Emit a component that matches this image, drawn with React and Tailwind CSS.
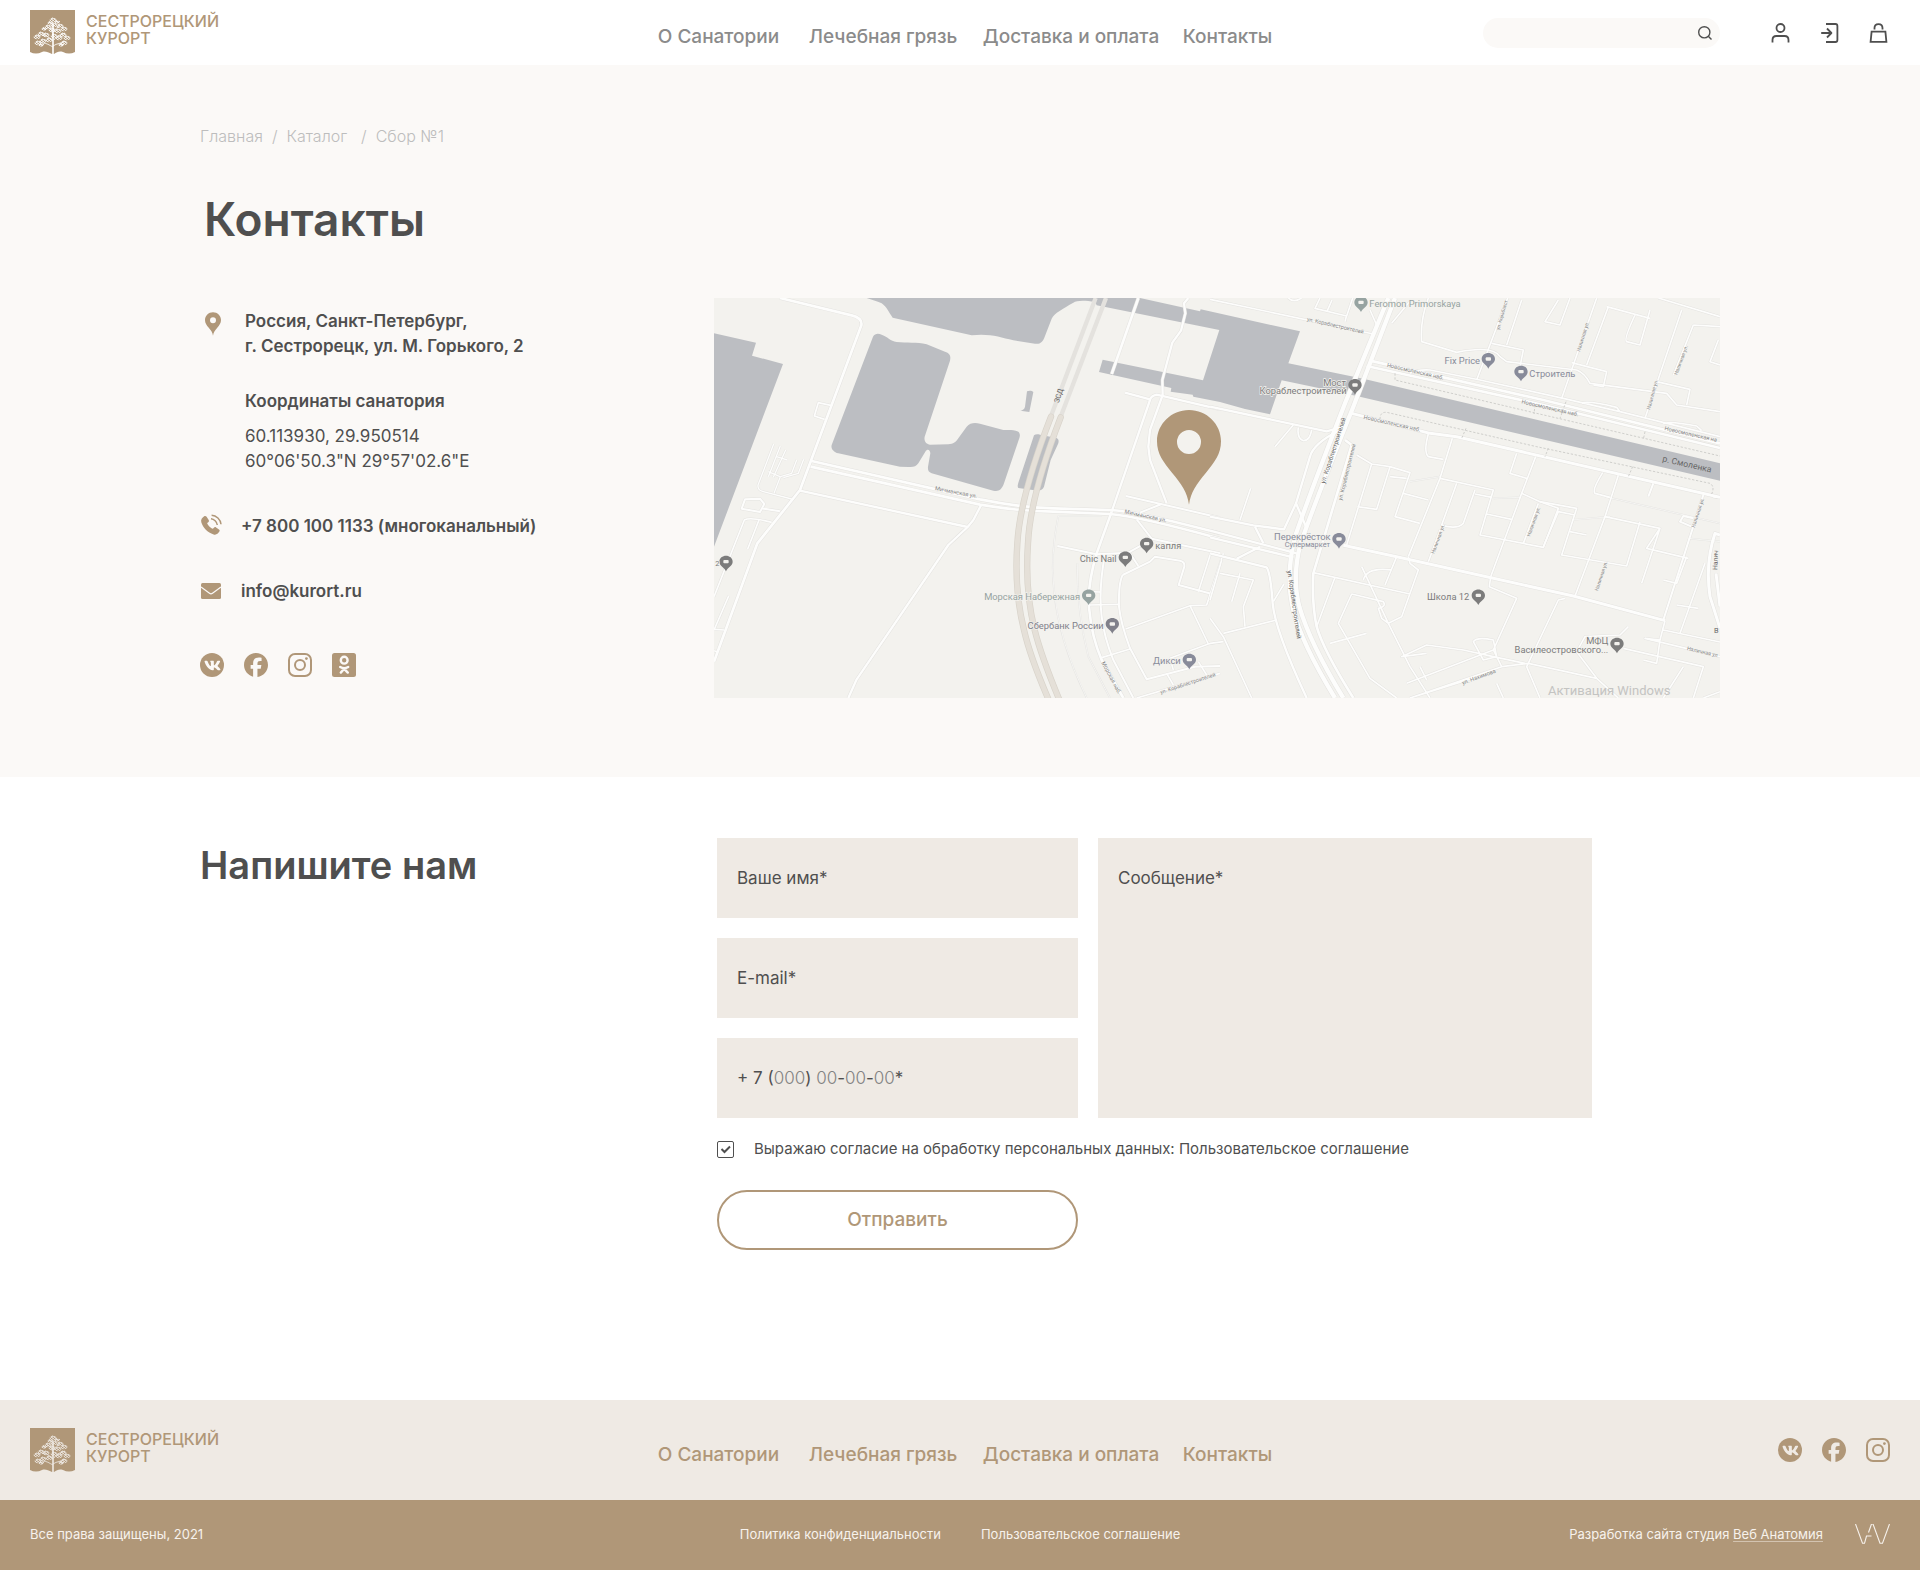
import React from "react";
import { FaFacebook } from "react-icons/fa6";
import { FaVk } from "react-icons/fa";

const PIN_PATH =
  "M96 0C43 0 0 42 0 94C0 132 19 156 45 188C73 222 91 246 96 284C101 246 119 222 147 188C173 156 192 132 192 94C192 42 149 0 96 0ZM96 60A36 36 0 1 1 96 132A36 36 0 1 1 96 60Z";

const NAV = ["О Санатории", "Лечебная грязь", "Доставка и оплата", "Контакты"];

/* ---------- logo ---------- */

const CROWN = [
  [23, 10, 3], [20, 13, 2], [27, 12, 2], [24, 15, 3], [30, 16, 3], [18, 17, 3], [34, 19, 3],
  [14, 19, 2], [22, 20, 3], [28, 21, 3], [11, 24, 3], [7, 27, 3], [16, 25, 3], [33, 25, 3],
  [37, 28, 3], [24, 26, 3], [29, 28, 3], [19, 30, 3], [13, 31, 3], [8, 33, 3], [34, 33, 3],
  [11, 35, 2], [31, 35, 2],
];

function Logo({ cut }) {
  return (
    <a href="#" className="flex items-start gap-[11px] text-[#b09778]">
      <svg width="45" height="44" viewBox="0 0 45 44" aria-hidden="true" className="shrink-0">
        <path d="M0 0H45V42C41 44 37 44 33 42C29 41 27 42 24 44H22C18 42 15 41 12 42C8 44 4 44 0 42Z" fill="#b09778" />
        <g className={cut} fill="none" stroke="currentColor">
          {CROWN.map(([x, y, r], i) => (
            <g key={i} strokeWidth="0.8">
              <ellipse cx={x} cy={y} rx={r} ry={r * 0.6} strokeDasharray="3 1" />
              <path d={`M${x - r} ${y + 1}l2 -2l1 2l2 -2M${x - 1} ${y - r * 0.7}l2 1`} />
            </g>
          ))}
          <path d="M23 44V14" strokeWidth="1.6" />
          <path d="M23 37C19 35 17 33 12 33M23 36C27 33 31 34 35 31M23 31C20 27 16 26 12 25M24 30C27 25 31 25 35 23M23 25C22 20 20 18 17 17M24 22C25 18 28 18 30 15" strokeWidth="0.8" />
        </g>
      </svg>
      <span className="pt-[3px] text-[16px] font-medium leading-[17px]">
        СЕСТРОРЕЦКИЙ
        <br />
        КУРОРТ
      </span>
    </a>
  );
}

function Nav({ tone }) {
  return (
    <nav className={tone}>
      <ul className="grid grid-cols-[151px_174px_200px_auto] pl-[10px] text-[19px] font-medium leading-6">
        {NAV.map((t) => (
          <li key={t} className="whitespace-nowrap">
            <a href="#">{t}</a>
          </li>
        ))}
      </ul>
    </nav>
  );
}

/* ---------- socials ---------- */

function Vk({ cut }) {
  return (
    <span className="grid size-6 place-items-center rounded-full bg-[#b09778]">
      <FaVk className={cut} size={17} aria-hidden="true" />
    </span>
  );
}

function Instagram() {
  return (
    <svg width="24" height="24" viewBox="0 0 24 24" fill="none" stroke="#b09778" strokeWidth="2" aria-hidden="true">
      <rect x="1" y="1" width="22" height="22" rx="6" />
      <circle cx="12" cy="12" r="5" />
      <circle cx="18.4" cy="5.6" r="1.4" fill="#b09778" stroke="none" />
    </svg>
  );
}

function Socials({ cut, ok }) {
  return (
    <div className="flex gap-5 text-[#b09778]">
      <a href="#" aria-label="ВКонтакте"><Vk cut={cut} /></a>
      <a href="#" aria-label="Facebook"><FaFacebook size={24} /></a>
      <a href="#" aria-label="Instagram"><Instagram /></a>
      {ok && (
        <a href="#" aria-label="Одноклассники">
          <svg width="24" height="24" viewBox="0 0 24 24" aria-hidden="true">
            <rect width="24" height="24" rx="2.5" fill="#b09778" />
            <g fill="none" stroke="#fbf9f7" strokeWidth="2.4" strokeLinecap="round" strokeLinejoin="round">
              <circle cx="12.2" cy="7.2" r="3.4" />
              <path d="M8.2 14C10.600 15.500 13.800 15.500 16.200 14M12.200 15.800L8.800 19.600M12.200 15.800L15.800 19.600" />
            </g>
          </svg>
        </a>
      )}
    </div>
  );
}

/* ---------- map ---------- */

const WATER = [
  "M42 130L168 158L156 197L249 222L42 770Z",
  "M500 24L1200 24L1185 36C1150 30 1130 32 1120 38C1090 55 1062 70 1055 86L1035 138C1028 158 1020 163 1005 161L940 151C900 142 870 130 815 136L578 83C568 70 560 50 545 40C530 32 515 30 500 24Z",
  "M1180 24L1320 24L1500 64L1502 58L1800 124L1765 220L1990 266L3060 520V572L1970 318L1745 271L1710 373L1635 357L1560 336L1545 333L1480 320L1478 314L1412 305L1414 294L1197 246L1208 209L1509 271L1558 120L1190 46Z",
  "M519 140C525 130 535 130 545 134C565 141 570 153 590 156C620 160 650 155 680 163L735 185C750 190 753 198 750 212L674 440C671 455 680 463 690 464L745 463C760 462 768 456 775 445L800 410C810 398 825 397 840 401L910 420C925 420 940 418 955 425C962 432 960 440 956 450L912 580C905 600 895 606 880 602L695 550C685 546 683 540 684 530L691 490C690 478 682 475 676 485L655 520C648 530 640 532 625 531L600 530L415 490C400 486 392 475 395 465Z",
  "M981 304C988 301 996 302 1000 306L988 366L961 362C972 360 974 354 975 350Z",
  "M1002 436C1006 433 1012 432 1020 434L1070 444C1076 447 1077 452 1075 460L1052 510L1032 590C1028 598 1024 600 1015 602L955 594C952 590 953 585 955 578Z",
];

/* [path, width] in the coordinates of the western half */
const ROADS_WEST = [
  ["M240 24L455 76Q488 84 484 106L328 525L300 600L172 760L42 1115", 8],
  ["M392 346L355 338L343 378L374 388", 5],
  ["M335 513L840 628Q960 652 1060 655L1230 660Q1300 662 1560 730", 8],
  ["M332 530L840 644Q960 664 1060 665L1230 672Q1320 680 1560 746", 8],
  ["M300 602L803 711L820 690L843 646M803 711L745 765L470 1168L445 1224", 7],
  ["M221 462L174 585Q172 600 190 605L275 627M241 560L222 610M257 480L220 562M241 468L205 560M241 560L275 550L290 510M230 500L262 510M311 508L295 550L250 563M205 545L240 560", 4],
  ["M135 628L180 626L193 642L180 666L125 656ZM185 655L240 664", 6],
  ["M42 920L133 690Q150 680 215 697M177 690L143 777M86 918L42 1020M45 1018L72 1020M42 1082L52 1086", 5],
  ["M1315 24L1235 252", 8],
  ["M1465 24L1452 40L1456 70L1443 122L1417 158L1387 270L1388 315", 7],
  ["M1388 315L1350 420L1345 470L1350 510L1400 640", 7],
  ["M1275 308L1350 328M1560 358L1370 314Q1352 318 1350 330L1235 665", 7],
  ["M1278 618L1560 683M1385 642L1320 668", 6],
  ["M1235 665L1190 790Q1160 890 1168 960Q1175 1040 1205 1110L1270 1224", 8],
  ["M1215 792Q1195 900 1205 980Q1212 1040 1240 1110L1300 1224", 6],
  ["M1072 768L1190 793L1285 788L1340 757M1310 688L1355 746L1560 790M1290 790L1315 828", 6],
  ["M1268 855L1350 815L1365 800L1440 812Q1455 815 1453 830L1436 885L1536 912M1268 855Q1255 880 1257 950Q1262 1000 1290 1075L1340 1168L1485 1130L1560 1128", 6],
  ["M1168 945L1257 943M1205 1103L1290 1077M1277 1017L1470 947L1520 945L1570 790M1470 947L1525 1062M1410 1105L1525 1062L1560 1056M1400 1150L1420 1185M1495 1115L1520 1155M1532 790L1495 905M1160 905L1200 906M1410 1105L1420 1140", 5],
  ["M1075 678L1205 678M1075 678Q1050 800 1062 900Q1075 1050 1160 1224M1132 820Q1130 960 1165 1100L1230 1224", 2],
  ["M1310 1224L1560 1150", 5],
];

/* [path, width] in the coordinates of the eastern half */
const ROADS_EAST = [
  ["M535 24L405 340Q300 610 255 740Q225 860 250 960Q275 1060 375 1224", 13],
  ["M555 24L430 350Q325 610 272 760Q245 860 268 950Q300 1060 400 1224", 13],
  ["M0 28L490 132M480 60L500 105M603 30L545 100M235 24Q250 40 275 24M330 24L315 55L410 78L428 24M366 30L352 62M410 75L405 95", 5],
  ["M480 212L1000 330L1530 460", 8],
  ["M470 228L1000 345L1530 474", 8],
  ["M600 250Q620 238 660 240L810 270L1060 325L1230 365M1115 340Q1130 330 1220 352L1230 365M1360 402Q1370 390 1460 408L1475 422M1230 365L1530 440", 5],
  ["M425 370L660 430L740 440L1530 622", 9],
  ["M0 350L350 424L400 410M390 420Q310 460 300 500L258 640L222 718L130 706L0 680M258 640L288 710M135 710L160 760", 7],
  ["M250 405L195 470M265 412Q260 445 280 452Q300 452 305 420M122 595L90 690", 5],
  ["M0 722L260 790M0 742L250 802M80 806L150 770M0 790L170 832Q182 850 188 940Q195 1020 290 1224", 7],
  ["M405 450L425 465L310 850Q305 940 320 1010Q340 1080 430 1224", 8],
  ["M400 766L560 800L850 865L1090 918L1365 992", 9],
  ["M440 495L485 522L410 765M485 522L540 530L600 548L555 680L630 700M540 530L500 658L442 650M540 560L590 565M580 610L655 630", 5],
  ["M727 445L690 565L595 800M655 432Q640 485 655 500L700 508M690 565L850 600L810 735L1000 772L1045 655L990 635M740 580L695 705Q740 720 760 700L795 600M830 672L905 688M795 612L845 622", 5],
  ["M977 500L935 610L842 860M920 490L900 550L950 565M935 610L990 635L1100 655L1055 795L1250 828L1290 695M1000 770L1045 665L1095 675", 5],
  ["M1225 556L1185 680L1095 918M1178 548Q1145 600 1155 610L1200 622M1185 680L1350 715L1295 880M1080 725L1130 735M1350 715L1310 775L1435 805M985 640L940 760", 5],
  ["M1480 615L1360 990M1330 580L1315 620M1450 685L1420 678L1410 695L1445 710M1510 620L1530 622", 6],
  ["M655 24Q630 90 635 155L740 187Q850 165 870 200L890 215L1100 240Q1125 250 1140 280L1370 310L1400 345L1530 365", 5],
  ["M893 24L800 270M935 30L890 165M845 160L940 180L930 230M1045 30L1005 95L1050 105L1080 24M1160 24L1055 325M1195 50L1130 225M1085 218L1190 245L1180 290L1150 285M1320 60L1290 165L1250 155Q1240 150 1275 75M1415 60L1305 385M1190 50L1320 85M1345 24L1530 80M1450 105L1390 255M1450 105L1530 110M1525 150L1500 215L1530 225M1340 275L1440 298L1430 345", 5],
  ["M655 815L690 720M595 800L600 820L625 840L575 980L535 1000L455 830M310 848L600 912M375 862L320 1010M460 870Q470 830 545 840M525 885L560 800M425 912L385 1000L480 1165L560 1224M425 912L520 935Q530 950 505 955L515 985L535 1000L600 1130L660 1224M360 1060L470 1030M0 985L40 1040L125 1224M40 1030L200 990M0 1060L40 1055M35 810L0 930M30 850L130 870L100 950L105 1010M90 850L65 935M222 882L190 935", 5],
  ["M842 860L838 890L920 925L850 1080L875 1130L955 1120L1160 1165L1225 1224M850 1080L590 1180M875 1130L600 1224M650 1090L575 1100L650 1065L760 1080L850 1100L945 1120M790 1055Q800 1040 850 1050L860 1100L820 1110ZM1065 925L1045 930L950 1130L990 1224M630 1130L650 1170M820 1155L600 1224M860 1180L880 1224", 5],
  ["M1530 735L1515 730Q1485 820 1500 920L1530 1015M1518 850L1530 950", 9],
  ["M1365 992L1350 1050L1305 1045L1530 1100M1360 1020L1530 1056M1485 820L1410 1030M1465 955L1400 945M1350 1050L1340 1120L1300 1110M1240 1075L1480 1130L1450 1224M1100 1085L1125 1040L1230 1035L1255 1010M1100 1085L1160 1165M1360 1224L1420 1130M1430 800L1400 880L1360 870M1530 1205L1480 1224", 5],
  ["M1185 620L1530 700M1085 690L1200 680M850 625L930 622M600 575L690 560M1435 745L1530 755", 2],
];

const DASHES_EAST =
  "M555 250L555 270L980 370L1530 498M510 388Q510 365 530 367L980 470L1500 580Q1515 590 1505 612M768 415L755 445M1015 475L1005 500M1268 530L1255 560M975 345L972 372M1068 335L1050 385M1305 425L1300 448";

/* x, y, angle, size, text */
const STREETS = [
  [704, 600, 11, 17, "Мичманская ул."],
  [1273, 670, 12, 17, "Мичманская ул."],
  [1204, 1118, 62, 17, "Морская наб."],
  [1382, 1212, -18, 16, "ул. Кораблестроителей"],
  [1820, 92, 13, 16, "ул. Кораблестроителей"],
  [2060, 230, 13, 17, "Новосмоленская наб."],
  [2464, 340, 13, 17, "Новосмоленская наб."],
  [2893, 420, 13, 17, "Новосмоленская на"],
  [1990, 386, 13, 17, "Новосмоленская наб."],
  [1925, 632, -76, 16, "ул. Кораблестроителей"],
  [2398, 120, -74, 14, "ул. Кораблест"],
  [2640, 186, -73, 15, "Наличная ул."],
  [2932, 256, -70, 15, "Наличная ул."],
  [2850, 360, -75, 15, "Наличная ул."],
  [2203, 792, -70, 15, "Наличная ул."],
  [2490, 740, -70, 15, "Наличная ул."],
  [2694, 904, -72, 15, "Наличная ул."],
  [2984, 714, -72, 15, "Наличная ул."],
  [2288, 1184, -20, 17, "ул. Нахимова"],
  [2960, 1080, 13, 16, "Наличная ул"],
];

const PLACES = [
  [78, 816, "#7c7c7c", [[58, 829, "2", "end", 22]]],
  [1340, 762, "#7c7c7c", [[1366, 776, "капля", "start"]]],
  [1276, 803, "#7c7c7c", [[1250, 817, "Chic Nail", "end"]]],
  [1166, 917, "#96a3a1", [[1140, 930, "Морская Набережная", "end"]]],
  [1237, 1003, "#80808a", [[1211, 1017, "Сбербанк России", "end"]]],
  [1468, 1110, "#888b9a", [[1442, 1123, "Дикси", "end"]]],
  [1983, 38, "#96a3a1", [[2008, 50, "Feromon Primorskaya", "start"]]],
  [2365, 208, "#888b9a", [[2340, 222, "Fix Price", "end"]]],
  [2463, 246, "#888b9a", [[2488, 260, "Строитель", "start"]]],
  [1965, 286, "#7c7c7c", [[1938, 288, "Мост", "end"], [1940, 313, "Кораблестроителей", "end"]]],
  [1917, 748, "#888b9a", [[1892, 751, "Перекрёсток", "end"], [1890, 771, "Супермаркет", "end", 22]]],
  [2335, 917, "#7c7c7c", [[2308, 930, "Школа 12", "end"]]],
  [2751, 1062, "#7c7c7c", [[2725, 1063, "МФЦ", "end"], [2725, 1088, "Василеостровского...", "end"]]],
];

function Roads({ list }) {
  return (
    <g fill="none" strokeLinejoin="round">
      {list.map(([d, w], i) => (
        <path key={i} d={d} stroke="#e4e3e0" strokeWidth={w + 3} />
      ))}
      {list.map(([d, w], i) => (
        <path key={i} d={d} stroke="#fdfdfc" strokeWidth={w} />
      ))}
    </g>
  );
}

const HIGHWAY =
  "M1053 380Q960 620 952 760Q942 900 972 1020Q990 1100 1048 1234M1082 382Q990 620 984 760Q974 900 1004 1020Q1024 1100 1080 1234";

function Map() {
  return (
    <svg
      viewBox="42 24 3018 1200"
      preserveAspectRatio="xMidYMid slice"
      role="img"
      aria-label="Карта проезда"
      className="block h-[400px] w-full bg-[#f3f2ee]"
      fontFamily="Roboto, sans-serif"
    >
      <g fill="#bcbec2">
        {WATER.map((d) => <path key={d} d={d} />)}
      </g>
      <path d="M1187 24L1053 378M1218 24L1082 380" fill="none" strokeWidth="13" stroke="#e4e2de" />
      <Roads list={ROADS_WEST} />
      <g transform="translate(1530 0)">
        <Roads list={ROADS_EAST} />
        <path d={DASHES_EAST} fill="none" stroke="#bdbdba" strokeWidth="2" strokeDasharray="7 5" />
      </g>
      <g fill="none" strokeLinecap="round">
        <path d={HIGHWAY} stroke="#d8d3ca" strokeWidth="19" />
        <path d={HIGHWAY} stroke="#e5e0d8" strokeWidth="15" />
      </g>
      <g fill="#888888">
        {STREETS.map(([x, y, a, s, t]) => (
          <text key={`${x}-${y}`} transform={`translate(${x} ${y}) rotate(${a})`} fontSize={s}>{t}</text>
        ))}
      </g>
      <g fill="#666666">
        <text transform="translate(1076 340) rotate(-72)" fontSize="22">ЗСД</text>
        <text transform="translate(1874 582) rotate(-72)" fontSize="19">ул. Кораблестроителей</text>
        <text transform="translate(1762 842) rotate(82)" fontSize="19">ул. Кораблестроителей</text>
        <text transform="translate(3052 840) rotate(-88)" fontSize="20">Налич</text>
        <text transform="translate(2886 514) rotate(13)" fontSize="26">р. Смоленка</text>
        <text x="3042" y="1028" fontSize="22">В</text>
      </g>
      {PLACES.map(([x, y, c, lines]) => (
        <g key={`${x}-${y}`} fill={c}>
          <path d={`M${x - 20} ${y}C${x - 20} ${y - 25} ${x + 20} ${y - 25} ${x + 20} ${y}C${x + 19} ${y + 14} ${x + 5} ${y + 15} ${x} ${y + 28}C${x - 5} ${y + 15} ${x - 19} ${y + 14} ${x - 20} ${y}Z`} />
          <rect x={x - 8} y={y - 6} width="16" height="10" rx="3" fill="#f3f2ee" />
          {lines.map(([tx, ty, t, anchor, size]) => (
            <text key={t} x={tx} y={ty} textAnchor={anchor} fontSize={size || 28} stroke="#f3f2ee" strokeWidth="4" paintOrder="stroke">{t}</text>
          ))}
        </g>
      ))}
      <text x="2544" y="1214" fontSize="39" fill="#c4c4c2">Активация Windows</text>
      <g transform="translate(1371 360)">
        <path d={PIN_PATH} fill="#b09778" />
      </g>
    </svg>
  );
}

/* ---------- page ---------- */

const FIELD =
  "h-20 w-full bg-[#efeae4] px-5 pb-px text-[17px] leading-6 text-[#4f4f4f] outline-none placeholder:text-[#4f4f4f] placeholder:opacity-100";

export default function App() {
  return (
    <div className="min-h-screen bg-white font-['Inter',sans-serif] text-[#4f4f4f]">
      <header className="grid h-[65px] grid-cols-[1fr_auto_1fr] items-start px-[30px]">
        <div className="pt-[10px]"><Logo cut="text-white" /></div>
        <div className="pt-[25px]"><Nav tone="text-[#8b8b8b]" /></div>
        <div className="flex items-center justify-end pr-0.5 pt-[18px]">
          <form className="relative w-[237px]" role="search">
            <input type="search" aria-label="Поиск" className="block h-[30px] w-full rounded-full bg-[#fbf9f7] pl-4 pr-9 text-sm outline-none" />
            <button type="button" aria-label="Найти" className="absolute right-2 top-2">
              <svg width="14" height="14" viewBox="0 0 14 14" fill="none" stroke="#4f4f4f" strokeWidth="1.4">
                <circle cx="6.3" cy="6.3" r="5.6" />
                <path d="M10.3 10.3L13.5 13.5" />
              </svg>
            </button>
          </form>
          <div className="ml-[51px] flex gap-[30px]">
            <a href="#" aria-label="Профиль">
              <svg width="19" height="20" viewBox="0 0 19 20" fill="none" stroke="#4f4f4f" strokeWidth="1.8">
                <circle cx="9.500" cy="5" r="4" />
                <path d="M1.500 19.500V17C1.500 14.600 3 13 5.400 13H13.600C16 13 17.500 14.600 17.500 17V19.500" />
              </svg>
            </a>
            <a href="#" aria-label="Войти">
              <svg width="19" height="20" viewBox="0 0 19 20" fill="none" stroke="#4f4f4f" strokeWidth="1.8" strokeLinejoin="round">
                <path d="M6 1H15.500C16.600 1 17.400 1.800 17.400 3V17C17.400 18.200 16.600 19 15.500 19H6M1.200 10H11M7 5.500L11.400 10L7 14.500" />
              </svg>
            </a>
            <a href="#" aria-label="Корзина">
              <svg width="19" height="20" viewBox="0 0 19 20" fill="none" stroke="#4f4f4f" strokeWidth="1.8">
                <path d="M2.600 8.600H16.400L17.400 18.800H1.600ZM5.500 6.500V5C5.500 2.600 7 1.200 9.500 1.200C12 1.200 13.500 2.600 13.500 5V6.500" />
              </svg>
            </a>
          </div>
        </div>
      </header>

      <main>
        <section className="bg-[#fbf9f7] px-[200px] pb-[79px] pt-[59px]">
          <nav aria-label="Хлебные крошки" className="flex text-[16px] font-light leading-6 text-[#bdbdbd]">
            <a href="#">Главная</a>
            <span className="mx-[9px]">/</span>
            <a href="#">Каталог</a>
            <span className="ml-[14px] mr-[9px]">/</span>
            <a href="#">Сбор №1</a>
          </nav>
          <h1 className="mt-[43px] pl-1 text-[46px] font-semibold leading-[56px]">Контакты</h1>

          <div className="mt-[51px] grid grid-cols-[514px_1fr]">
            <div className="pt-[11px] text-[17px] leading-[25px]">
              <div className="flex">
                <svg width="16" height="24" viewBox="0 0 192 284" className="ml-[5px] mt-[3px] shrink-0" aria-hidden="true">
                  <path d={PIN_PATH} fill="#b09778" />
                </svg>
                <div className="pl-6">
                  <p className="font-semibold">
                    Россия, Санкт-Петербург,
                    <br />
                    г. Сестрорецк, ул. М. Горького, 2
                  </p>
                  <p className="mt-[30px] font-semibold">Координаты санатория</p>
                  <p className="mt-[10px]">
                    60.113930, 29.950514
                    <br />
                    60°06'50.3"N 29°57'02.6"E
                  </p>
                </div>
              </div>
              <a href="tel:+78001001133" className="mt-10 flex font-semibold">
                <svg width="22" height="22" viewBox="0 0 22 22" className="shrink-0" aria-hidden="true">
                  <path d="M4.200 2.200C5 1.700 6 1.800 6.600 2.700L8.700 6C9.200 6.900 9 7.600 8.300 8.200L7.200 9.100C7.100 10.600 11.400 15 12.900 14.800L13.900 13.700C14.500 13 15.300 12.900 16.100 13.400L19 15.400C19.800 16 19.900 16.900 19.300 17.600C18 19.600 16.200 21.300 13.600 20.400C7.600 18.400 3 14 1.300 8.300C.5 5.700 2.100 3.500 4.200 2.200Z" fill="#b09778" />
                  <path d="M11 4.800C14 5 16.900 7.800 17.300 11M11.600 1.200C16.300 1.300 20.600 5.500 21 10.200" fill="none" stroke="#b09778" strokeWidth="1.500" />
                </svg>
                <span className="pl-[19px]">+7 800 100 1133 (многоканальный)</span>
              </a>
              <a href="mailto:info@kurort.ru" className="mt-10 flex font-semibold">
                <svg width="20" height="16" viewBox="0 0 20 16" className="ml-px mt-1 shrink-0" aria-hidden="true">
                  <rect width="20" height="16" rx="1.500" fill="#b09778" />
                  <path d="M0 4L8.500 10.200Q10 11.400 11.500 10.200L20 4" fill="none" stroke="#fbf9f7" strokeWidth="1.200" />
                </svg>
                <span className="pl-5">info@kurort.ru</span>
              </a>
              <div className="mt-[49px]"><Socials cut="text-[#fbf9f7]" ok /></div>
            </div>
            <Map />
          </div>
        </section>

        <section className="grid grid-cols-[517px_minmax(0,875px)] px-[200px] pb-[150px] pt-[61px]">
          <h2 className="pt-1 text-[38px] font-semibold leading-[46px]">Напишите нам</h2>
          <form onSubmit={(e) => e.preventDefault()}>
            <div className="grid grid-cols-[361fr_494fr] gap-5">
              <div className="flex flex-col gap-5">
                <input className={FIELD} type="text" aria-label="Ваше имя" placeholder="Ваше имя*" />
                <input className={FIELD} type="email" aria-label="E-mail" placeholder="E-mail*" />
                <div className="relative">
                  <input id="phone" className={FIELD} type="tel" />
                  <label htmlFor="phone" className="absolute left-5 top-7 text-[17px] leading-6">
                    + 7 (<span className="font-light text-[#828282]">000</span>){" "}
                    <span className="font-light text-[#828282]">00</span>-
                    <span className="font-light text-[#828282]">00</span>-
                    <span className="font-light text-[#828282]">00</span>*
                  </label>
                </div>
              </div>
              <textarea
                aria-label="Сообщение"
                placeholder="Сообщение*"
                className="block h-full w-full resize-none bg-[#efeae4] px-5 py-7 text-[17px] leading-6 outline-none placeholder:text-[#4f4f4f] placeholder:opacity-100"
              />
            </div>
            <label className="mt-[19px] flex items-center text-[15px] leading-6">
              <span className="grid size-[17px] shrink-0">
                <input type="checkbox" defaultChecked className="col-start-1 row-start-1 size-[17px] appearance-none rounded-[2px] border border-[#4f4f4f] bg-white" />
                <svg viewBox="0 0 17 17" className="pointer-events-none col-start-1 row-start-1 size-[17px]" aria-hidden="true">
                  <path d="M4.500 8L7.500 11L13 5.500" fill="none" stroke="#4f4f4f" strokeWidth="2" />
                </svg>
              </span>
              <span className="pl-5">Выражаю согласие на обработку персональных данных: Пользовательское соглашение</span>
            </label>
            <div className="grid grid-cols-[361fr_494fr] gap-5 pt-[29px]">
              <button type="submit" className="h-[60px] rounded-full border-2 border-[#b09778] text-[19px] font-medium text-[#b09778]">
                Отправить
              </button>
            </div>
          </form>
        </section>
      </main>

      <footer>
        <div className="grid h-[100px] grid-cols-[1fr_auto_1fr] items-start bg-[#efeae4] px-[30px]">
          <div className="pt-[28px]"><Logo cut="text-[#efeae4]" /></div>
          <div className="pt-[43px]"><Nav tone="text-[#b09778]" /></div>
          <div className="flex justify-end pt-[38px]"><Socials cut="text-[#efeae4]" /></div>
        </div>
        <div className="grid h-[70px] grid-cols-[1fr_auto_1fr] items-center bg-[#b09778] px-[30px] pb-0.5 text-[13px] leading-5 text-[#f7f2ec]">
          <p>Все права защищены, 2021</p>
          <div className="flex gap-10">
            <a href="#">Политика конфиденциальности</a>
            <a href="#">Пользовательское соглашение</a>
          </div>
          <div className="flex items-center justify-end gap-8">
            <p>
              Разработка сайта студия{" "}
              <a href="#" className="underline decoration-[#d3c3b0] decoration-1 underline-offset-2">Веб Анатомия</a>
            </p>
            <svg width="35" height="20" viewBox="0 0 35 20" fill="none" stroke="#f7f2ec" strokeWidth="1.100" aria-hidden="true">
              <path d="M.5 0L7.500 19.300H9.500L11.500 12H16.500M18 0H16.500L13.500 8.500M18 0L25 19.300H27.500L34.500 0" />
            </svg>
          </div>
        </div>
      </footer>
    </div>
  );
}
